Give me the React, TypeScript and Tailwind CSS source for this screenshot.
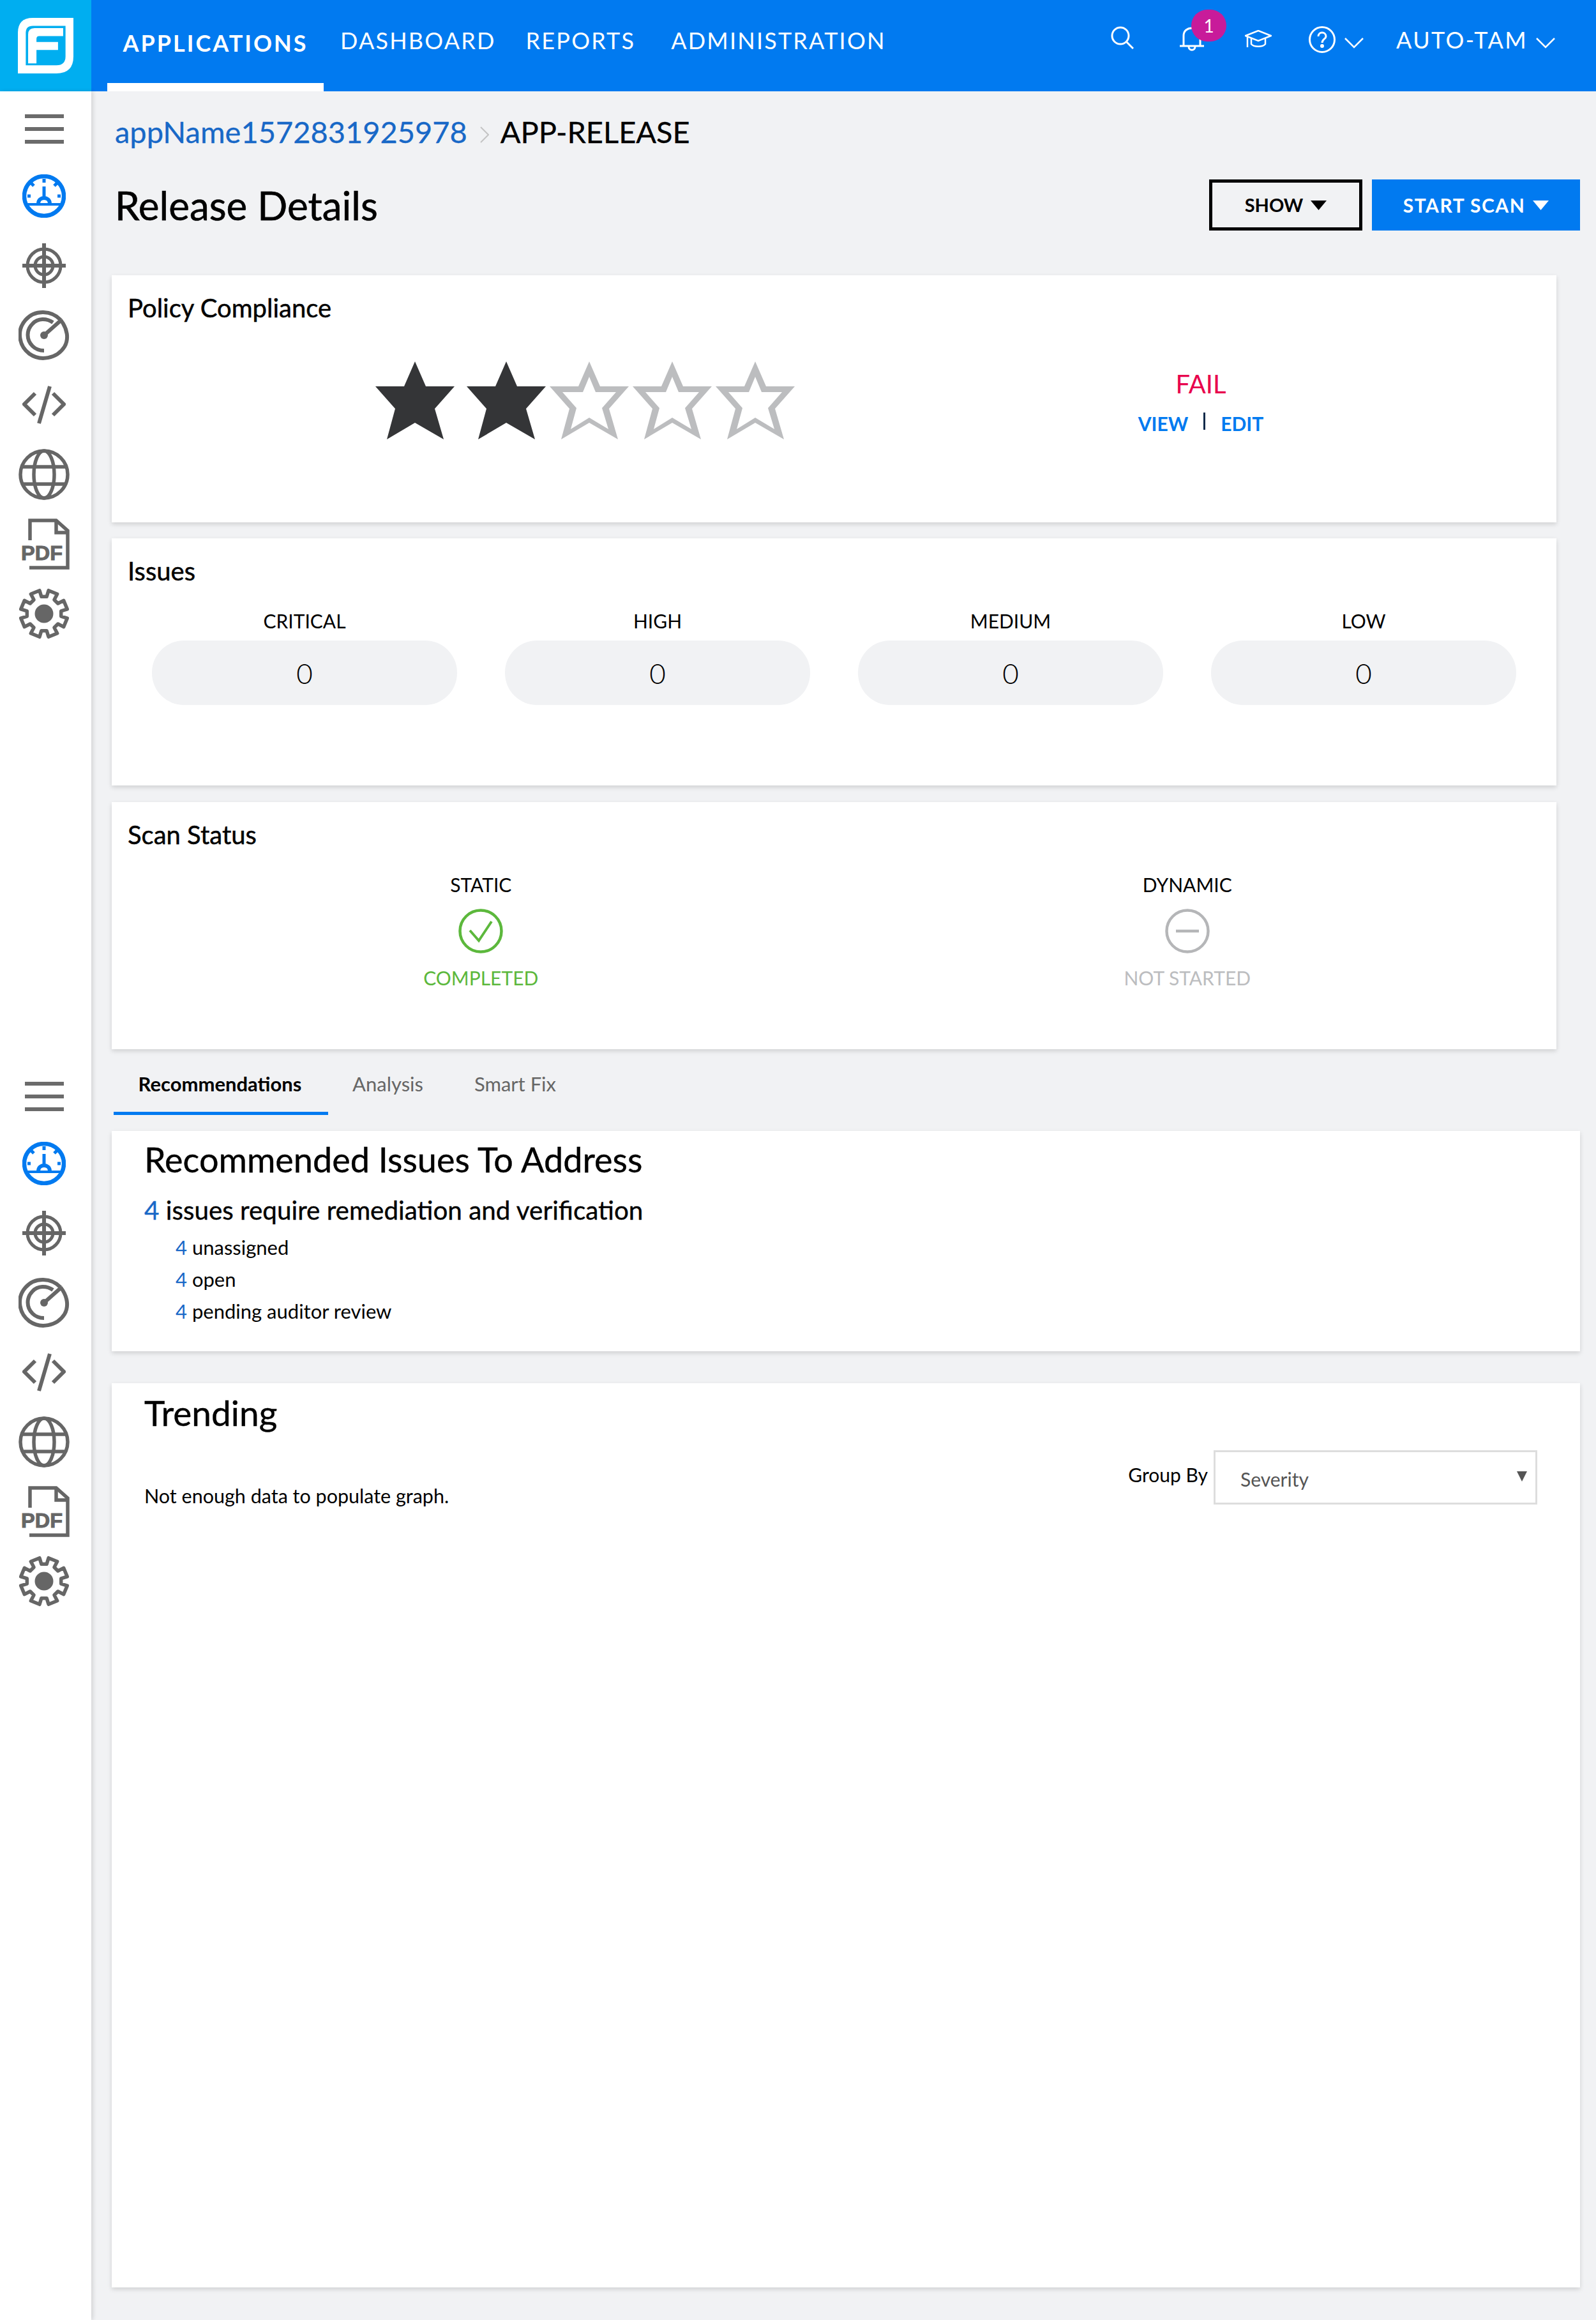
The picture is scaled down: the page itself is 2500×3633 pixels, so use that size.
const navItems = [
  { label: "DASHBOARD", margin: "ml-[26px]" },
  { label: "REPORTS", margin: "ml-[47px]" },
  { label: "ADMINISTRATION", margin: "ml-[56px]" },
]
const severities = ["CRITICAL", "HIGH", "MEDIUM", "LOW"]
const subCounts = ["unassigned", "open", "pending auditor review"]

function Logo() {
  return (
    <svg width="87" height="87" viewBox="0 0 260 260">
      <path d="M70 0H260V180Q260 260 180 260H0V70Q0 0 70 0Z" fill="#fff" />
      <path d="M70 37H223V180Q223 222 180 222H37V70Q37 37 70 37Z" fill="#00aef0" />
      <path d="M78 48H212V85H100Q87 85 87 98V113H188V150H87V213H48V78Q48 48 78 48Z" fill="#fff" />
    </svg>
  )
}

function Chevron() {
  return (
    <svg width="30" height="18" viewBox="0 0 30 18" fill="none" stroke="#fff" strokeWidth="2.5">
      <path d="M1 2L15 16L29 2" />
    </svg>
  )
}

function HeaderIcons() {
  return (
    <div className="flex items-center ml-auto text-white h-[120px] relative">
      <svg className="absolute left-[0px] top-[41px]" width="36" height="36" viewBox="0 0 36 36" fill="none" stroke="#fff" strokeWidth="3">
        <circle cx="15" cy="15" r="13" />
        <path d="M24 24L35 35" />
      </svg>
      <svg className="absolute left-[108px] top-[40px]" width="38" height="40" viewBox="0 0 38 40" fill="none" stroke="#fff" strokeWidth="3">
        <path d="M6 32V16C6 8 12 4 19 4C26 4 32 8 32 16V32" />
        <path d="M0 32H38" />
        <path d="M14 33C14 40 24 40 24 33" />
      </svg>
      <div className="absolute left-[126px] top-[15px] w-[55px] h-[50px] rounded-full bg-[#c81b9a] flex items-center justify-center text-[28px] leading-none">1</div>
      <svg className="absolute left-[210px] top-[47px]" width="42" height="28" viewBox="0 0 42 28" fill="none" stroke="#fff" strokeWidth="2.5">
        <path d="M1 9L21 1L41 9L21 17Z" />
        <path d="M10 13V22C14 27 28 27 32 22V13" />
        <path d="M4 10V27" />
      </svg>
      <svg className="absolute left-[310px] top-[41px]" width="42" height="42" viewBox="0 0 42 42" fill="none" stroke="#fff" strokeWidth="3">
        <circle cx="21" cy="21" r="19.5" />
        <path d="M15 16C15 8 27 8 27 16C27 20 21 20 21 26" />
        <circle cx="21" cy="31" r="1.5" fill="#fff" />
      </svg>
      <div className="absolute left-[366px] top-[58px]">
        <Chevron />
      </div>
      <div className="w-[760px]" />
      <span className="absolute left-[447px] top-[40px] text-[36px] leading-[44px] tracking-[2.4px] whitespace-nowrap">AUTO-TAM</span>
      <div className="absolute left-[666px] top-[58px]">
        <Chevron />
      </div>
    </div>
  )
}

function Header() {
  return (
    <header className="flex h-[143px] bg-[#017af0] text-white">
      <div className="w-[143px] h-[143px] bg-[#00aef0] flex items-center justify-center">
        <Logo />
      </div>
      <nav className="flex ml-[25px]">
        <div className="w-[339px] h-[143px] border-b-[13px] border-white flex justify-center pt-[42px] text-[36px] leading-[50px] font-bold tracking-[3px]">
          APPLICATIONS
        </div>
        {navItems.map((item) => (
          <div key={item.label} className={`${item.margin} pt-[38px] text-[36px] leading-[50px] tracking-[2.2px]`}>
            {item.label}
          </div>
        ))}
      </nav>
      <HeaderIcons />
    </header>
  )
}

function Hamburger() {
  return (
    <div className="flex flex-col gap-[14px] w-[61px]">
      <div className="h-[6px] bg-[#6b6b6b]" />
      <div className="h-[6px] bg-[#6b6b6b]" />
      <div className="h-[6px] bg-[#6b6b6b]" />
    </div>
  )
}

function GaugeIcon() {
  return (
    <svg width="68" height="68" viewBox="0 0 68 68" fill="none" stroke="#017af0" strokeWidth="6.5">
      <circle cx="34" cy="34" r="31" />
      <path d="M6 47H62" strokeWidth="4" />
      <path d="M34 7V13M34 19V38M8 34H13M55 34H60M14 14L18 18M54 14L50 18" strokeWidth="5" />
      <path d="M25 46C25 34 43 34 43 46" strokeWidth="6" />
    </svg>
  )
}

function TargetIcon() {
  return (
    <svg width="68" height="70" viewBox="0 0 68 70" fill="none" stroke="#666" strokeWidth="5">
      <circle cx="34" cy="35" r="26" />
      <circle cx="34" cy="35" r="14" />
      <path d="M34 0V70M0 35H68" strokeWidth="6" />
    </svg>
  )
}

function DialIcon() {
  return (
    <svg width="80" height="80" viewBox="0 0 80 80" fill="none" stroke="#666" strokeWidth="6">
      <path d="M66 16C52 1 26 -1 11 16C-4 33 1 57 17 69C34 81 60 77 72 58C79 46 77 30 66 16" />
      <path d="M54 20C44 13 30 13 22 22C12 32 12 47 22 57C27 62 33 64 40 64" />
      <path d="M40 40L66 17" />
      <circle cx="40" cy="40" r="6" fill="#666" stroke="none" />
    </svg>
  )
}

function CodeIcon() {
  return (
    <svg width="68" height="60" viewBox="0 0 68 60" fill="none" stroke="#666" strokeWidth="6">
      <path d="M20 12L3 29L20 46M48 12L65 29L48 46M43 1L26 59" />
    </svg>
  )
}

function GlobeIcon() {
  return (
    <svg width="80" height="80" viewBox="0 0 80 80" fill="none" stroke="#666" strokeWidth="5.5">
      <circle cx="40" cy="40" r="37" />
      <ellipse cx="40" cy="40" rx="16" ry="37" />
      <path d="M6 28H74M6 55H74" />
    </svg>
  )
}

function PdfIcon() {
  return (
    <svg className="ml-[3px]" width="76" height="80" viewBox="0 0 76 80" fill="none" stroke="#666" strokeWidth="5.5">
      <path d="M14 34V3H55L73 19V77H13" />
      <path d="M55 3V22H73" />
      <text x="0" y="65" fontFamily="Liberation Sans, sans-serif" fontWeight="700" fontSize="32" fill="#666" stroke="#666" strokeWidth="1" textLength="65" lengthAdjust="spacingAndGlyphs">PDF</text>
    </svg>
  )
}

function GearIcon() {
  const teeth = 8
  const ring = Array.from({ length: teeth }, (_, i) => {
    const a = (i * 2 * Math.PI) / teeth - Math.PI / 8
    const pt = (r: number, d: number) => `${40 + r * Math.cos(a + d)} ${40 + r * Math.sin(a + d)}`
    return `L${pt(27, -0.24)} L${pt(37, -0.2)} L${pt(37, 0.2)} L${pt(27, 0.24)}`
  })
  return (
    <svg width="80" height="80" viewBox="0 0 80 80" fill="none" stroke="#666" strokeWidth="5.5">
      <path d={`M${ring.join(" ").slice(1)}Z`} strokeLinejoin="round" />
      <circle cx="40" cy="40" r="14.5" fill="#666" stroke="none" />
    </svg>
  )
}

function SideIcons({ className }: { className: string }) {
  const icons = [<GaugeIcon />, <TargetIcon />, <DialIcon />, <CodeIcon />, <GlobeIcon />, <PdfIcon />, <GearIcon />]
  return (
    <div className={className}>
      <div className="h-[100px] flex items-center justify-center pr-[5px]">
        <Hamburger />
      </div>
      {icons.map((icon, i) => (
        <div key={i} className="h-[109px] flex items-center justify-center pr-[5px]">
          {icon}
        </div>
      ))}
    </div>
  )
}

function Star({ filled, className }: { filled: boolean; className?: string }) {
  return (
    <svg className={className} width="124" height="122" viewBox="0 0 124 122">
      <polygon
        points="62,0 79,39 124,39 93,74 107,122 62,96 18,122 31,74 0,39 45,39"
        fill={filled ? "#343537" : "#bcbdbf"}
      />
      {!filled && (
        <polygon points="62,24 72,48 104,48 82,73 92,106 62,88 33,106 42,73 20,48 52,48" fill="#fff" />
      )}
    </svg>
  )
}

function Card({ className, children }: { className?: string; children: React.ReactNode }) {
  return <section className={`bg-white shadow-[0_3px_7px_rgba(0,0,0,0.14)] ${className}`}>{children}</section>
}

function CardTitle({ text }: { text: string }) {
  return <h2 className="pt-[26px] pl-[25px] text-[40px] leading-[50px] [-webkit-text-stroke:0.5px_black] text-black">{text}</h2>
}

function PolicyCard() {
  return (
    <Card className="h-[387px]">
      <CardTitle text="Policy Compliance" />
      <div className="flex items-start mt-[59px] ml-[413px]">
        <Star filled />
        <Star filled className="ml-[19px]" />
        <Star filled={false} className="ml-[6px]" />
        <Star filled={false} className="ml-[6px]" />
        <Star filled={false} className="ml-[6px]" />
        <div className="ml-[486px] w-[300px] pt-[11px] flex flex-col items-center">
          <div className="text-[40px] leading-[48px] text-[#e8004c]">FAIL</div>
          <div className="mt-[18px] flex items-center text-[30px] leading-[40px] font-bold text-[#017af0]">
            <span>VIEW</span>
            <span className="mx-[24px] w-[3px] h-[27px] bg-[#0a2a4a] -mt-[8px]" />
            <span>EDIT</span>
          </div>
        </div>
      </div>
    </Card>
  )
}

function IssuesCard() {
  return (
    <Card className="h-[387px] mt-[25px]">
      <CardTitle text="Issues" />
      <div className="grid grid-cols-4 gap-[75px] mx-[63px] mt-[33px]">
        {severities.map((s) => (
          <div key={s} className="text-center">
            <div className="text-[30px] leading-[40px] text-black">{s}</div>
            <div className="mt-[11px] h-[101px] rounded-[50px] bg-[#f1f2f4] flex items-center justify-center text-[44px] font-light text-black">
              0
            </div>
          </div>
        ))}
      </div>
    </Card>
  )
}

function ScanCard() {
  return (
    <Card className="h-[387px] mt-[26px]">
      <CardTitle text="Scan Status" />
      <div className="grid grid-cols-2 mx-[25px] mt-[33px] text-center text-[30px] leading-[40px]">
        <div className="flex flex-col items-center">
          <div className="text-black">STATIC</div>
          <svg className="mt-[18px]" width="70" height="70" viewBox="0 0 70 70" fill="none" stroke="#5cb83c" strokeWidth="4.5">
            <circle cx="35" cy="35" r="32.5" />
            <path d="M18 34L32 50L52 20" strokeWidth="4" />
          </svg>
          <div className="mt-[18px] text-[#5cb83c]">COMPLETED</div>
        </div>
        <div className="flex flex-col items-center">
          <div className="text-black">DYNAMIC</div>
          <svg className="mt-[18px]" width="70" height="70" viewBox="0 0 70 70" fill="none" stroke="#b5b6b8" strokeWidth="4.5">
            <circle cx="35" cy="35" r="32.5" />
            <path d="M17 35H53" />
          </svg>
          <div className="mt-[18px] text-[#bcbdbf]">NOT STARTED</div>
        </div>
      </div>
    </Card>
  )
}

function Tabs() {
  return (
    <div className="flex ml-[3px] pt-[34px] text-[31px] leading-[40px]">
      <div className="w-[336px] pb-[24px] pr-[3px] border-b-[5px] border-[#017af0] font-bold text-black text-center">Recommendations</div>
      <div className="pl-[38px] pr-[38px] text-[#666]">Analysis</div>
      <div className="ml-[4px] px-[38px] text-[#666]">Smart Fix</div>
    </div>
  )
}

function RecommendedCard() {
  return (
    <Card className="h-[345px] mt-[25px] pl-[51px] pt-[15px]">
      <h2 className="text-[54px] leading-[60px] [-webkit-text-stroke:0.4px_black] text-black">Recommended Issues To Address</h2>
      <p className="mt-[24px] text-[40.4px] leading-[50px] [-webkit-text-stroke:0.4px_black] text-black">
        <span className="text-[#1868c7] [-webkit-text-stroke:0.4px_#1868c7]">4</span> issues require remediation and verification
      </p>
      <ul className="mt-[8px] pl-[49px] text-[31px] leading-[50px] text-black">
        {subCounts.map((s) => (
          <li key={s}>
            <span className="text-[#1868c7]">4</span> {s}
          </li>
        ))}
      </ul>
    </Card>
  )
}

function TrendingCard() {
  return (
    <Card className="h-[1416px] mt-[50px] pl-[51px] pr-[67px] pt-[16px]">
      <h2 className="text-[55px] leading-[60px] [-webkit-text-stroke:0.4px_black] text-black">Trending</h2>
      <div className="flex justify-between items-start mt-[29px]">
        <p className="pt-[51px] text-[30.5px] leading-[40px] text-black">Not enough data to populate graph.</p>
        <div className="flex items-start">
          <span className="mt-[18px] mr-[9px] text-[30px] leading-[40px] text-black">Group By</span>
          <div className="w-[507px] h-[85px] border-[3px] border-[#dddddd] bg-white flex items-center pl-[39px] pr-[13px] pt-[5px] text-[30px] text-[#555]">
            <span>Severity</span>
            <svg className="ml-auto -mt-[8px]" width="16" height="16" viewBox="0 0 16 16">
              <path d="M0 0H16L8 16Z" fill="#555" />
            </svg>
          </div>
        </div>
      </div>
    </Card>
  )
}

export default function App() {
  return (
    <div className="w-[2500px] h-[3633px] bg-[#f1f2f4] font-['Lato',sans-serif] flex flex-col overflow-hidden">
      <Header />
      <div className="flex flex-1">
        <aside className="w-[143px] bg-white shadow-[3px_0_6px_rgba(0,0,0,0.12)]">
          <SideIcons className="pt-[9px]" />
          <SideIcons className="mt-[652px]" />
        </aside>
        <main className="flex-1 pl-[32px] pr-[25px]">
          <div className="flex items-center pt-[34px] text-[47px] leading-[58px] [-webkit-text-stroke:0.3px]">
            <span className="ml-[5px] text-[#1868c7]">appName1572831925978</span>
            <svg className="ml-[20px] mr-[18px] mt-[10px]" width="14" height="26" viewBox="0 0 14 26" fill="none" stroke="#c4c4c4" strokeWidth="2">
              <path d="M1 1L13 13L1 25" />
            </svg>
            <span className="text-black">APP-RELEASE</span>
          </div>
          <div className="flex items-center mt-[46px] h-[80px]">
            <h1 className="ml-[5px] text-[62px] [-webkit-text-stroke:0.6px_black] text-black">Release Details</h1>
            <button className="ml-auto w-[240px] h-[80px] border-[5px] border-black flex items-center justify-center gap-[12px] text-[29px] font-bold text-black">
              SHOW
              <svg width="25" height="15" viewBox="0 0 25 15">
                <path d="M0 0H25L12.5 15Z" fill="#000" />
              </svg>
            </button>
            <button className="ml-[15px] w-[326px] h-[80px] bg-[#017af0] flex items-center justify-center gap-[12px] text-[30px] font-bold text-white tracking-[1.5px]">
              START SCAN
              <svg width="25" height="15" viewBox="0 0 25 15">
                <path d="M0 0H25L12.5 15Z" fill="#fff" />
              </svg>
            </button>
          </div>
          <div className="mt-[70px] mr-[37px]">
            <PolicyCard />
            <IssuesCard />
            <ScanCard />
          </div>
          <Tabs />
          <RecommendedCard />
          <TrendingCard />
        </main>
      </div>
    </div>
  )
}
